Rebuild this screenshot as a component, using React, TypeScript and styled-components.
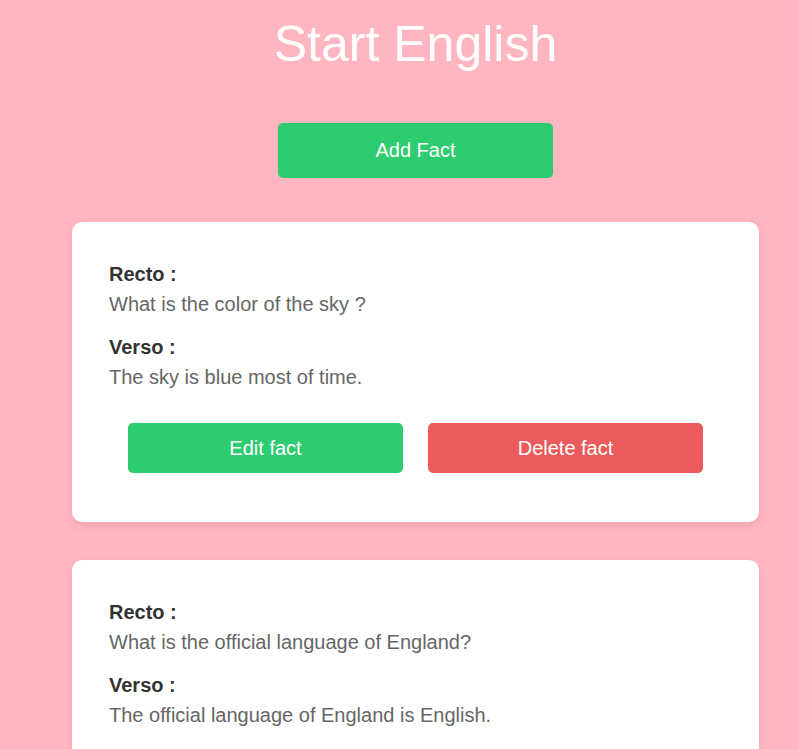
import React from "react";
import styled, { createGlobalStyle } from "styled-components";

const Global = createGlobalStyle`
  html, body {
    margin: 0;
    padding: 0;
    background: #ffb6c1;
    font-family: "Liberation Sans", Arial, sans-serif;
  }
`;

const Page = styled.div`
  padding-left: 32px;
  display: flex;
  flex-direction: column;
  align-items: center;
`;

const Title = styled.h1`
  margin: 15px 0 0;
  font-size: 50px;
  font-weight: 400;
  color: #ffffff;
  text-align: center;
`;

const Button = styled.button<{ $variant: "green" | "red"; $tall?: boolean }>`
  width: 275px;
  height: ${(p) => (p.$tall ? 55 : 50)}px;
  border: none;
  border-radius: 5px;
  background: ${(p) => (p.$variant === "green" ? "#2ecc71" : "#eb5b5b")};
  color: #ffffff;
  font-family: "Liberation Sans", Arial, sans-serif;
  font-size: 20px;
  cursor: pointer;
  padding: 0;
`;

const AddButton = styled(Button)`
  margin-top: 50px;
`;

const List = styled.div`
  margin-top: 44px;
  width: 687px;
  display: flex;
  flex-direction: column;
  gap: 38px;
`;

const Card = styled.div`
  background: #ffffff;
  border-radius: 10px;
  box-shadow: 0 4px 10px rgba(0, 0, 0, 0.08);
  padding: 37px 37px 49px;
`;

const Label = styled.div`
  font-size: 20px;
  font-weight: 700;
  line-height: 30px;
  color: #333333;
`;

const Text = styled.div<{ $last?: boolean }>`
  font-size: 20px;
  line-height: 30px;
  color: #666666;
  margin-bottom: ${(p) => (p.$last ? 0 : 13)}px;
`;

const Actions = styled.div`
  margin-top: 31px;
  display: flex;
  justify-content: center;
  gap: 25px;
`;

const facts = [
  {
    recto: "What is the color of the sky ?",
    verso: "The sky is blue most of time.",
  },
  {
    recto: "What is the official language of England?",
    verso: "The official language of England is English.",
  },
];

export default function App() {
  return (
    <>
      <Global />
      <Page>
        <Title>Start English</Title>
        <AddButton $variant="green" $tall>
          Add Fact
        </AddButton>
        <List>
          {facts.map((f, i) => (
            <Card key={i}>
              <Label>Recto :</Label>
              <Text>{f.recto}</Text>
              <Label>Verso :</Label>
              <Text $last>{f.verso}</Text>
              <Actions>
                <Button $variant="green">Edit fact</Button>
                <Button $variant="red">Delete fact</Button>
              </Actions>
            </Card>
          ))}
        </List>
      </Page>
    </>
  );
}
